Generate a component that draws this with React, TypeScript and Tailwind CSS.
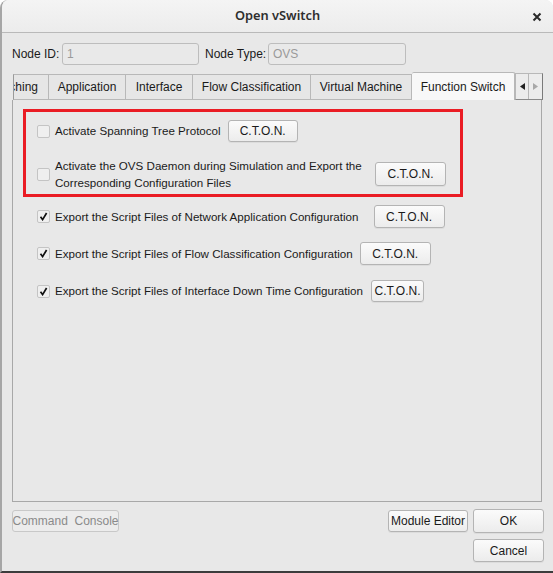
import React from "react";

const font = { fontFamily: '"Liberation Sans", Arial, sans-serif' };

function Btn({ children, className = "" }: { children: React.ReactNode; className?: string }) {
  return (
    <div
      className={
        "flex shrink-0 items-center justify-center whitespace-nowrap rounded-[3px] border border-[#b4b4b4] bg-gradient-to-b from-[#fbfbfb] to-[#ececec] text-[12px] text-[#1a1a1a] shadow-[0_1px_0_rgba(0,0,0,0.05)] " +
        className
      }
    >
      {children}
    </div>
  );
}

function Check({ checked }: { checked?: boolean }) {
  return (
    <div className="flex h-[13px] w-[13px] shrink-0 items-center justify-center rounded-[2px] border border-[#c4c4c4] bg-[#efefef]">
      {checked && (
        <svg width="9" height="9" viewBox="0 0 9 9">
          <path d="M1.5 4.8 L3.6 7.6 L7.6 1" fill="none" stroke="#111" strokeWidth="1.7" />
        </svg>
      )}
    </div>
  );
}

export default function App() {
  return (
    <div className="h-[573px] w-[553px] bg-white" style={font}>
      <div className="flex h-[573px] w-[553px] flex-col overflow-hidden rounded-t-[8px] border-b-2 border-l-2 border-[#3c3c3c] border-l-[#a6a6a6] bg-[#e8e8e8]">
        {/* Title bar */}
        <div className="relative flex h-[33px] shrink-0 items-center justify-center border-b border-[#b9b9b9] bg-gradient-to-b from-[#f4f4f4] to-[#ececec]">
          <span className="text-[#2e2e2e]" style={{ fontFamily: '"Noto Sans", "Liberation Sans", sans-serif', fontWeight: 600, fontSize: 12.8 }}>
            Open vSwitch
          </span>
          <div className="absolute right-[11px] top-[12px]">
            <svg width="10" height="10" viewBox="0 0 10 10">
              <path d="M1.5 1.5 L8.5 8.5 M8.5 1.5 L1.5 8.5" stroke="#2a2a2a" strokeWidth="2" />
            </svg>
          </div>
        </div>

        {/* Node row */}
        <div className="mt-[10px] flex h-[22px] items-center pl-[10px] text-[12px] text-[#1a1a1a]">
          <span className="w-[50px] whitespace-nowrap">Node ID:</span>
          <div className="flex h-[22px] w-[137px] items-center rounded-[3px] border border-[#bdbdbd] bg-[#e9e9e9] pl-[4px] text-[#9a9a9a]">
            1
          </div>
          <span className="ml-[6px] w-[63px] whitespace-nowrap">Node Type:</span>
          <div className="flex h-[22px] w-[138px] items-center rounded-[3px] border border-[#bdbdbd] bg-[#e9e9e9] pl-[4px] text-[#9a9a9a]">
            OVS
          </div>
        </div>

        {/* Tabs */}
        <div className="mt-[7px] flex h-[28px] items-end pl-[11px] text-[12px] text-[#1a1a1a]">
          <div className="flex h-[26px] w-[36px] items-center justify-end overflow-hidden whitespace-nowrap border-b border-l border-r border-t border-[#b8b8b8] border-l-[#9a9a9a] bg-[#e6e6e6] pr-[10px]">
            ching
          </div>
          <div className="flex h-[26px] w-[77px] items-center justify-center border-b border-r border-t border-[#b8b8b8] bg-[#e6e6e6]">Application</div>
          <div className="flex h-[26px] w-[67px] items-center justify-center border-b border-r border-t border-[#b8b8b8] bg-[#e6e6e6]">Interface</div>
          <div className="flex h-[26px] w-[118px] items-center justify-center border-b border-r border-t border-[#b8b8b8] bg-[#e6e6e6]">Flow Classification</div>
          <div className="flex h-[26px] w-[101px] items-center justify-center border-b border-r border-t border-[#b8b8b8] bg-[#e6e6e6]">Virtual Machine</div>
          <div className="flex h-[28px] w-[103px] items-center justify-center rounded-t-[2px] border-r border-t border-[#b8b8b8] bg-[#f8f8f8]">Function Switch</div>
          <div className="flex h-[27px] w-[28px] border border-[#b8b8b8] border-b-[#8a8a8a] border-r-[#7a7a7a] bg-[#ececec]">
            <div className="flex w-[13px] items-center justify-center border-r border-[#b8b8b8]">
              <svg width="5" height="7" viewBox="0 0 5 7"><path d="M5 0 L0 3.5 L5 7 Z" fill="#222" /></svg>
            </div>
            <div className="flex flex-1 items-center justify-center">
              <svg width="5" height="7" viewBox="0 0 5 7"><path d="M0 0 L5 3.5 L0 7 Z" fill="#a8a8a8" /></svg>
            </div>
          </div>
        </div>

        {/* Panel */}
        <div className="ml-[10px] flex h-[402px] w-[530px] flex-col border-b border-l border-r border-[#a8a8a8] bg-[#e8e8e8] text-[11.6px] text-[#1a1a1a]">
          <div className="ml-[10px] mt-[9px] w-[440px] border-[3px] border-[#ea1c24] pb-[3px] pl-[11px] pt-[8px]">
            <div className="flex h-[22px] items-center">
              <Check />
              <span className="ml-[5px] whitespace-nowrap">Activate Spanning Tree Protocol</span>
              <Btn className="ml-[7px] h-[22px] w-[70px]">C.T.O.N.</Btn>
            </div>
            <div className="mt-[15px] flex items-center">
              <Check />
              <span className="ml-[5px] w-[313px] leading-[17px]">
                Activate the OVS Daemon during Simulation and Export the Corresponding Configuration Files
              </span>
              <Btn className="ml-[7px] h-[24px] w-[71px]">C.T.O.N.</Btn>
            </div>
          </div>

          <div className="mt-[8px] flex h-[23px] items-center pl-[24px]">
            <Check checked />
            <span className="ml-[5px] whitespace-nowrap">Export the Script Files of Network Application Configuration</span>
            <Btn className="ml-[15px] h-[23px] w-[71px]">C.T.O.N.</Btn>
          </div>
          <div className="mt-[14px] flex h-[23px] items-center pl-[24px]">
            <Check checked />
            <span className="ml-[5px] whitespace-nowrap">Export the Script Files of Flow Classification Configuration</span>
            <Btn className="ml-[7px] h-[23px] w-[71px]">C.T.O.N.</Btn>
          </div>
          <div className="mt-[15px] flex h-[22px] items-center pl-[24px]">
            <Check checked />
            <span className="ml-[5px] whitespace-nowrap">Export the Script Files of Interface Down Time Configuration</span>
            <Btn className="ml-[8px] h-[22px] w-[53px]">C.T.O.N.</Btn>
          </div>
        </div>

        {/* Bottom buttons */}
        <div className="mt-[7px] flex pl-[10px] pr-[9px] text-[12px]">
          <div className="mt-[1px] flex h-[22px] w-[107px] shrink-0 items-center justify-center whitespace-nowrap rounded-[3px] border border-[#c8c8c8] bg-[#ececec] text-[#8a8a8a]">
            Command&nbsp; Console
          </div>
          <div className="flex-1" />
          <Btn className="mt-[1px] h-[22px] w-[80px]">Module Editor</Btn>
          <div className="ml-[5px] flex flex-col gap-[6px]">
            <Btn className="h-[24px] w-[71px] border-[#4a4a8a]">OK</Btn>
            <Btn className="h-[23px] w-[71px]">Cancel</Btn>
          </div>
        </div>
      </div>
    </div>
  );
}
